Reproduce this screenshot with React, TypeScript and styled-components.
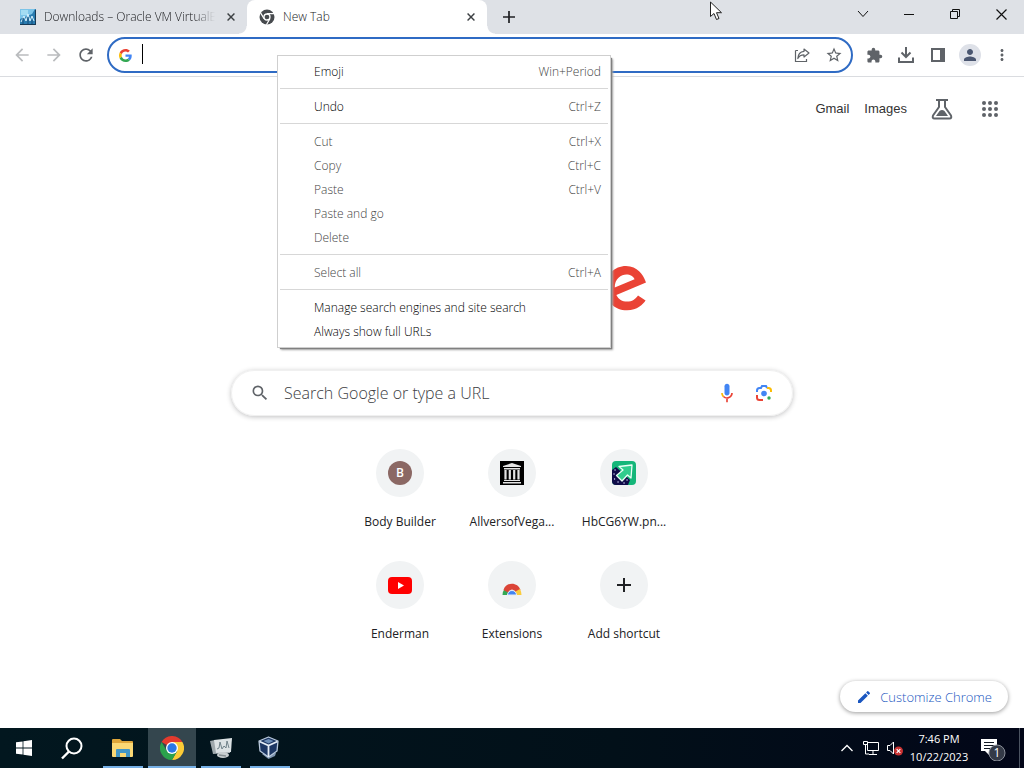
import React from "react";
import styled, { createGlobalStyle, css } from "styled-components";
import {
  MdArrowBack,
  MdArrowForward,
  MdRefresh,
  MdStarBorder,
  MdExtension,
  MdMoreVert,
  MdSearch,
  MdEdit,
  MdPerson,
} from "react-icons/md";

const uiFont = `"Open Sans", "Noto Sans", sans-serif`;

const GlobalStyle = createGlobalStyle`
  *, *::before, *::after { box-sizing: border-box; }
  body { margin: 0; background: #fff; font-family: ${uiFont}; font-size: 12px; color: #202124; }
  button, input { font: inherit; color: inherit; }
  svg { display: block; flex: none; }
`;

const Desktop = styled.div`
  position: relative;
  display: flex;
  flex-direction: column;
  min-height: 100vh;
  overflow: hidden;
`;

const plainButton = css`
  display: flex;
  align-items: center;
  justify-content: center;
  padding: 0;
  border: 0;
  background: transparent;
`;

/* Tab strip */

const TabStrip = styled.header`
  display: flex;
  height: 34px;
  background: #dee1e6;
`;

const Tab = styled.div<{ $active?: boolean }>`
  position: relative;
  display: flex;
  align-items: center;
  gap: 8px;
  width: ${(p) => (p.$active ? 240 : 247)}px;
  padding: 0 8px 0 ${(p) => (p.$active ? 12 : 20)}px;
  background: ${(p) => (p.$active ? "#fff" : "transparent")};
  border-radius: 8px 8px 0 0;
  color: #202124;
  font-weight: 300;

  &::before,
  &::after {
    content: ${(p) => (p.$active ? '""' : "none")};
    position: absolute;
    bottom: 0;
    width: 8px;
    height: 8px;
  }
  &::before {
    left: -8px;
    background: radial-gradient(circle at 0 0, transparent 7px, #fff 8px);
  }
  &::after {
    right: -8px;
    background: radial-gradient(circle at 100% 0, transparent 7px, #fff 8px);
  }
`;

const TabTitle = styled.span<{ $fade?: boolean }>`
  flex: 1;
  min-width: 0;
  overflow: hidden;
  white-space: nowrap;
  line-height: 20px;
  ${(p) => p.$fade && "mask-image: linear-gradient(to right, #000 88%, transparent);"}
`;

const TabButton = styled.button`
  ${plainButton}
  width: 16px;
  height: 16px;
`;

const NewTabButton = styled.button`
  ${plainButton}
  width: 28px;
  margin-left: 8px;
`;

const WindowControls = styled.div`
  display: flex;
  height: 28px;
  margin-left: auto;
`;

const WindowButton = styled.button`
  ${plainButton}
  width: 46px;
  color: #111;
`;

/* Toolbar */

const Toolbar = styled.div`
  display: flex;
  align-items: center;
  height: 43px;
  padding: 0 6px;
  border-bottom: 1px solid #dadce0;
`;

const ToolButton = styled.button<{ $dim?: boolean }>`
  ${plainButton}
  width: 32px;
  height: 32px;
  color: ${(p) => (p.$dim ? "#babcbe" : "#5f6368")};
`;

const Avatar = styled.span`
  display: flex;
  align-items: center;
  justify-content: center;
  width: 22px;
  height: 22px;
  border-radius: 50%;
  background: #dee1e8;
  color: #4a5670;
`;

const Omnibox = styled.form`
  display: flex;
  flex: 1;
  align-items: center;
  height: 36px;
  margin: 0 5px;
  padding: 0 1px 0 10px;
  border: 2px solid #2f6bc4;
  border-radius: 18px;
`;

const Caret = styled.span`
  width: 1px;
  height: 20px;
  margin: 0 0 2px 10px;
  background: #000;
`;

const OmniboxInput = styled.input`
  flex: 1;
  min-width: 0;
  border: 0;
  outline: 0;
  background: transparent;
  font-size: 14px;
`;

/* Context menu */

const Menu = styled.div`
  position: absolute;
  top: 55px;
  left: 277px;
  z-index: 2;
  width: 334px;
  padding: 4px 2px 3px;
  border: 1px solid #cfcfcf;
  background: #fff;
  box-shadow: 2px 2px 1px -1px #808080, 3px 3px 2px -1px #a8a8a8;
`;

const MenuItem = styled.button`
  display: flex;
  justify-content: space-between;
  width: 100%;
  height: 24px;
  padding: 0 7px 0 34px;
  border: 0;
  background: transparent;
  font-weight: 300;
  line-height: 24px;
  color: #000;

  &:disabled { color: #444; }
`;

const Shortcut = styled.span`
  color: #444;
`;

const MenuRule = styled.hr`
  height: 1px;
  margin: 4px 0 6px;
  border: 0;
  background: #d7d7d7;
`;

/* New tab page */

const Page = styled.main`
  display: flex;
  flex: 1;
  flex-direction: column;
  align-items: center;
`;

const TopLinks = styled.nav`
  display: flex;
  align-items: center;
  align-self: stretch;
  justify-content: flex-end;
  height: 64px;
  padding-right: 22px;
  font-family: "Liberation Sans", Arial, sans-serif;
  font-size: 13px;
`;

const TopLink = styled.a`
  margin-right: 15px;
  padding-bottom: 2px;
  color: #333;
  text-decoration: none;
`;

const TopButton = styled.button`
  ${plainButton}
  width: 24px;
  height: 32px;
  margin-left: 24px;

  ${TopLink} + & { margin-left: 8px; }
`;

const Logo = styled.div`
  margin: 100px 0 37px;
`;

const SearchBox = styled.form`
  display: flex;
  align-items: center;
  width: 562px;
  max-width: 100%;
  height: 46px;
  padding: 0 18px;
  border: 1px solid #f0f0f0;
  border-radius: 23px;
  box-shadow: 0 1px 5px rgba(32, 33, 36, 0.28);
  color: #5f6368;
`;

const SearchInput = styled.input`
  flex: 1;
  min-width: 0;
  padding: 0;
  margin-left: 14px;
  border: 0;
  outline: 0;
  background: transparent;
  font-size: 16px;
  font-weight: 300;

  &::placeholder { color: #3c4043; opacity: 1; }
`;

const SearchAction = styled.button`
  ${plainButton}
  width: 20px;
  height: 24px;
  margin-left: 17px;
`;

const Tiles = styled.div`
  display: grid;
  grid-template-columns: repeat(3, 112px);
  margin-top: 17px;
`;

const Tile = styled.a`
  display: flex;
  flex-direction: column;
  align-items: center;
  height: 112px;
  padding-top: 16px;
  color: #202124;
  text-decoration: none;
  line-height: 20px;
`;

const TileIcon = styled.span`
  display: flex;
  align-items: center;
  justify-content: center;
  width: 48px;
  height: 48px;
  margin-bottom: 15px;
  border-radius: 50%;
  background: #f1f3f4;
`;

const Monogram = styled.span`
  width: 24px;
  height: 24px;
  border-radius: 50%;
  background: #8b6864;
  color: #fff;
  font-weight: 600;
  line-height: 24px;
  text-align: center;
`;

const Footer = styled.footer`
  display: flex;
  align-self: stretch;
  justify-content: flex-end;
  margin-top: auto;
  padding: 0 16px 16px;
`;

const CustomizeButton = styled.button`
  ${plainButton}
  gap: 8px;
  height: 31px;
  padding: 0 16px;
  border-radius: 16px;
  background: #fff;
  box-shadow: 0 1px 4px rgba(0, 0, 0, 0.4);
  color: #1a56c0;
  font-size: 13px;
  font-weight: 300;
`;

/* Taskbar */

const Taskbar = styled.footer`
  display: flex;
  align-items: stretch;
  height: 40px;
  background: linear-gradient(to right, #02171f, #021019 60%, #020618);
  color: #fff;
`;

const TaskButton = styled.button`
  ${plainButton}
  width: 48px;
  color: #fff;
`;

const Apps = styled.div`
  display: flex;
  gap: 1px;
  margin-left: 3px;
`;

const AppButton = styled.button<{ $active?: boolean }>`
  ${plainButton}
  flex-direction: column;
  justify-content: space-between;
  width: 48px;
  padding-top: 8px;
  background: ${(p) => (p.$active ? "#34464e" : "transparent")};

  &::after {
    content: "";
    width: ${(p) => (p.$active ? 48 : 40)}px;
    height: 2px;
    background: #76b0e6;
  }
`;

const Tray = styled.div`
  display: flex;
  align-items: center;
  margin-left: auto;
`;

const TrayButton = styled.button`
  ${plainButton}
  width: 24px;
  height: 40px;
`;

const Clock = styled.time`
  width: 64px;
  text-align: center;
  line-height: 18px;
  font-size: 11px;
`;

const NoticeButton = styled.button`
  ${plainButton}
  width: 48px;
  height: 40px;
  padding-right: 4px;
`;

const ShowDesktop = styled.button`
  width: 5px;
  height: 40px;
  padding: 0;
  border: 0;
  border-left: 1px solid #4b5361;
  background: transparent;
`;

const Pointer = styled.div`
  position: absolute;
  top: 1px;
  left: 710px;
  pointer-events: none;
`;

const Cross = ({ size = 8 }: { size?: number }) => (
  <svg width={size} height={size} viewBox="0 0 10 10" stroke="#3c4043" strokeWidth="1.8">
    <path d="M.7.7l8.6 8.6M9.3.7L.7 9.3" />
  </svg>
);

const PerformanceIcon = () => (
  <svg width="16" height="16" viewBox="0 0 16 16">
    <rect width="16" height="16" fill="#2a7cb0" />
    <path d="M0 0h15L12 5 0 10z" fill="#7cc4e8" />
    <path d="M1 1h7v5H1z" fill="#a4dcf2" />
    <path d="M1 13l3-6 2 5 2-7 2 7 2-5 2 5" fill="none" stroke="#d8f3ff" />
    <path d="M3 15V9M8 15V8M12 15v-4" stroke="#164c78" />
    <path d="M0 15.5h16M15.500 1v15" stroke="#163a56" />
  </svg>
);

const ChromeMono = () => (
  <svg width="16" height="16" viewBox="0 0 16 16">
    <circle cx="8" cy="8" r="7.5" fill="#474a4e" />
    <circle cx="8" cy="8" r="3" fill="#474a4e" stroke="#fff" strokeWidth="1.3" />
    <path d="M8 4.6h7M5.1 9.7L1.6 3.9M10.9 9.7l-3.5 6" stroke="#fff" strokeWidth="1.2" />
  </svg>
);

const GoogleG = () => (
  <svg width="13" height="13" viewBox="0 0 48 48">
    <path fill="#EA4335" d="M24 9.5c3.54 0 6.71 1.22 9.21 3.6l6.85-6.85C35.9 2.38 30.47 0 24 0 14.62 0 6.51 5.38 2.56 13.22l7.98 6.19C12.43 13.72 17.74 9.5 24 9.5z" />
    <path fill="#4285F4" d="M46.98 24.55c0-1.57-.15-3.09-.38-4.55H24v9.02h12.94c-.58 2.96-2.26 5.48-4.78 7.18l7.73 6c4.51-4.18 7.09-10.36 7.09-17.65z" />
    <path fill="#FBBC05" d="M10.53 28.59c-.48-1.45-.76-2.99-.76-4.59s.27-3.14.76-4.59l-7.98-6.19C.92 16.46 0 20.12 0 24c0 3.88.92 7.54 2.56 10.78l7.97-6.19z" />
    <path fill="#34A853" d="M24 48c6.48 0 11.93-2.13 15.89-5.81l-7.73-6c-2.15 1.45-4.92 2.3-8.16 2.3-6.26 0-11.57-4.22-13.47-9.91l-7.98 6.19C6.51 42.62 14.62 48 24 48z" />
  </svg>
);

const ShareIcon = () => (
  <svg width="16" height="16" viewBox="0 0 16 16" fill="none" stroke="#5f6368" strokeWidth="1.2">
    <path d="M1.500 3.500v11h11V12M1.500 3.500H4" />
    <path d="M10 2l5 4-5 4V7.800C7 7.800 5 9 3.800 11.500 4 7.500 6 4.700 10 4.300z" strokeLinejoin="round" />
  </svg>
);

const DownloadIcon = () => (
  <svg width="18" height="18" viewBox="0 0 18 18" fill="none" stroke="#5f6368" strokeWidth="2">
    <path d="M9 1v9.500M4.500 6.500L9 11l4.500-4.500M2 11.500V16h14v-4.500" />
  </svg>
);

const PanelIcon = () => (
  <svg width="14" height="14" viewBox="0 0 14 14">
    <rect x="1" y="1" width="12" height="12" fill="none" stroke="#5f6368" strokeWidth="2" />
    <path d="M9 1h4v12H9z" fill="#5f6368" />
  </svg>
);

const FlaskIcon = () => (
  <svg width="22" height="22" viewBox="0 0 22 22" fill="none" stroke="#5f6368" strokeWidth="2">
    <path d="M5 2h12M8 2v7L2 17.500Q1 20.500 3.500 20.500h15Q21 20.500 20 17.500L14 9V2" strokeLinejoin="round" />
    <path d="M5 18l3.500-5q2.500-2 5 0L17 18z" fill="#5f6368" stroke="none" />
  </svg>
);

const AppsIcon = () => (
  <svg width="16" height="16" viewBox="0 0 16 16" fill="#5f6368">
    {[2, 8, 14].map((y) => [2, 8, 14].map((x) => <circle key={`${x}-${y}`} cx={x} cy={y} r="2" />))}
  </svg>
);

const GoogleLogo = () => (
  <svg width="272" height="92" viewBox="0 0 272 92" role="img" aria-label="Google">
    <path
      fill="#EA4335"
      d="M262.020 54.480l7.560 5.040c-2.440 3.610-8.320 9.830-18.480 9.830-12.600 0-22.010-9.740-22.010-22.180 0-13.190 9.490-22.180 20.920-22.180 11.510 0 17.140 9.160 18.980 14.110l1.010 2.520-29.650 12.280c2.270 4.450 5.800 6.720 10.750 6.720 4.960 0 8.400-2.440 10.920-6.140zm-23.270-7.980l19.820-8.230c-1.090-2.770-4.370-4.700-8.230-4.700-4.950 0-11.840 4.370-11.590 12.930z"
    />
  </svg>
);

const MicIcon = () => (
  <svg width="20" height="20" viewBox="0 0 24 24">
    <path fill="#4285f4" d="M12 15c1.700 0 3-1.300 3-3V4c0-1.700-1.300-3-3-3S9 2.300 9 4v8c0 1.700 1.300 3 3 3z" />
    <path fill="#ea4335" d="M11 18.920h2V23h-2z" />
    <path fill="#fbbc04" d="M7 12H5c0 1.930.780 3.680 2.050 4.950l1.410-1.410C7.560 14.630 7 13.380 7 12z" />
    <path fill="#ea4335" d="M12 17c-1.380 0-2.630-.560-3.540-1.470l-1.410 1.410A6.990 6.990 0 0 0 12 19c3.870 0 7-3.130 7-7h-2c0 2.760-2.240 5-5 5z" />
  </svg>
);

const LensIcon = () => (
  <svg width="18" height="18" viewBox="0 0 18 18" fill="none" strokeWidth="2">
    <path d="M2 8V6.500Q2 4 4.500 4H6l1-2h4l1 2" stroke="#4285f4" />
    <path d="M12 4h1.500Q16 4 16 6.500V8" stroke="#fbbc04" />
    <path d="M2 11v2.500Q2 16 4.500 16H8" stroke="#ea4335" />
    <circle cx="9" cy="9.500" r="2.800" fill="#4285f4" />
    <circle cx="14" cy="14" r="1.700" fill="#34a853" />
  </svg>
);

const ArchiveIcon = () => (
  <svg width="24" height="24" viewBox="0 0 24 24">
    <rect width="24" height="24" fill="#000" />
    <path d="M3 5l9-3 9 3v1H3zM4 7h16v1.500H4zM4 19h16v1H4zM3 21h18v1.500H3z" fill="#e4e4e4" />
    <path d="M5.500 9v9.500M9.800 9v9.500M14.200 9v9.500M18.500 9v9.500" stroke="#e4e4e4" strokeWidth="2.200" />
  </svg>
);

const GreenArrowIcon = () => (
  <svg width="24" height="24" viewBox="0 0 24 24">
    <rect width="24" height="24" rx="4" fill="#14b679" />
    <path d="M0 9l4-3 14 13-2 5H4q-4 0-4-4z" fill="#100c49" />
    <path d="M7 5.500l13-1.500-1 13-3.500-3-5.500 6-5.500-5.500L11 9z" fill="#2fcc8d" stroke="#e9fff5" strokeWidth="1.300" strokeLinejoin="round" />
    <path d="M3 9h.100M2 13h.100M2.500 18h.100M6 21h.100M12 22h.100M15 19h.100" stroke="#dcdcff" strokeWidth="1.300" strokeLinecap="round" />
  </svg>
);

const VideoIcon = () => (
  <svg width="24" height="17" viewBox="0 0 24 17">
    <rect width="24" height="17" rx="4" fill="#f00" />
    <path d="M10 5v7l6-3.500z" fill="#fff" />
  </svg>
);

const RainbowIcon = () => (
  <svg width="24" height="24" viewBox="0 0 24 24">
    <path d="M2.500 22a9.500 9.500 0 0 1 2-6l5 3.500-1 2.500z" fill="#34a853" />
    <path d="M3.500 17C6 8.500 18 8.500 20.500 17l-4.500 2.500q-4-6-8 0z" fill="#db4437" />
    <path d="M20 16q1.500 3 1.500 6h-6l-1-3z" fill="#fbcc3c" />
    <path d="M7.500 22a4.500 4.500 0 0 1 9 0z" fill="#4285f4" stroke="#e6ecf4" />
  </svg>
);

const PlusIcon = ({ size, weight }: { size: number; weight: number }) => (
  <svg width={size} height={size} viewBox="0 0 14 14" stroke="#202124" strokeWidth={weight}>
    <path d="M7 0v14M0 7h14" />
  </svg>
);

const StartIcon = () => (
  <svg width="16" height="16" viewBox="0 0 16 16" fill="#fff">
    <path d="M0 2.300L6.600 1.400v6.200H0zM7.400 1.300L16 0v7.600H7.400zM0 8.400h6.600v6.200L0 13.700zM7.400 8.400H16V16l-8.600-1.300z" />
  </svg>
);

const FindIcon = () => (
  <svg width="24" height="24" viewBox="0 0 24 24" fill="none" stroke="#fff" strokeWidth="2">
    <circle cx="14" cy="10" r="7.500" />
    <path d="M9 15.500L2 22.500" strokeWidth="2.400" />
  </svg>
);

const FolderIcon = () => (
  <svg width="24" height="24" viewBox="0 0 24 24">
    <path d="M1 4q0-1 1-1h7l2 2h10q1 0 1 1v14H1z" fill="#dfa63a" />
    <path d="M1 7h21v13q0 1-1 1H2q-1 0-1-1z" fill="#fbd874" />
    <path d="M5 21v-7q0-1 1-1h12q1 0 1 1v7h-4v-4H9v4z" fill="#4396c6" />
  </svg>
);

const ChromeIcon = () => (
  <svg width="24" height="24" viewBox="0 0 24 24">
    <path d="M12 12L1.600 6A12 12 0 0 1 22.400 6z" fill="#e33b2e" />
    <path d="M12 12V6h10.400A12 12 0 0 1 12 24l5.200-9z" fill="#fccb36" />
    <path d="M6.800 15L1.600 6A12 12 0 0 0 12 24l5.200-9z" fill="#2ba24c" />
    <circle cx="12" cy="12" r="6" fill="#fff" />
    <circle cx="12" cy="12" r="4.700" fill="#2b78e4" />
  </svg>
);

const MonitorIcon = () => (
  <svg width="24" height="24" viewBox="0 0 24 24">
    <path d="M1 5l5-1 16 0-1 13-17 1z" fill="#9fa8ac" />
    <path d="M5 4l18-2-1 14-15 1z" fill="#dce2e4" />
    <path d="M8 13l2-1 1-6 2 7 2-3 2 2 1-7 2 7" fill="none" stroke="#70828a" />
    <ellipse cx="14" cy="19" rx="6" ry="3" fill="#c9cfd1" />
    <path d="M10 19l7 1" stroke="#858e92" strokeWidth="1.500" />
  </svg>
);

const CubeIcon = () => (
  <svg width="24" height="24" viewBox="0 0 24 24">
    <path d="M4 18l6.500 5 6.500-3 1-3z" fill="#7f95b0" />
    <path d="M10.500 1L20 5l-1 10-8.500 6L2 15 1 5z" fill="#1d3763" stroke="#b9c9dc" strokeWidth="1.300" strokeLinejoin="round" />
    <path d="M1.500 5.500l9 4 9-4M10.500 10v11" fill="none" stroke="#e5edf6" strokeWidth="1.800" />
    <path d="M5.500 5l5-2 5 2-5 2.500z" fill="#6e8fb8" />
  </svg>
);

const menuGroups = [
  [{ label: "Emoji", keys: "Win+Period", on: true }],
  [{ label: "Undo", keys: "Ctrl+Z", on: true }],
  [
    { label: "Cut", keys: "Ctrl+X" },
    { label: "Copy", keys: "Ctrl+C" },
    { label: "Paste", keys: "Ctrl+V" },
    { label: "Paste and go" },
    { label: "Delete" },
  ],
  [{ label: "Select all", keys: "Ctrl+A" }],
  [
    { label: "Manage search engines and site search", on: true },
    { label: "Always show full URLs", on: true },
  ],
] as { label: string; keys?: string; on?: boolean }[][];

const tiles = [
  { label: "Body Builder", icon: <Monogram>B</Monogram> },
  { label: "AllversofVega...", icon: <ArchiveIcon /> },
  { label: "HbCG6YW.pn...", icon: <GreenArrowIcon /> },
  { label: "Enderman", icon: <VideoIcon /> },
  { label: "Extensions", icon: <RainbowIcon /> },
  { label: "Add shortcut", icon: <PlusIcon size={14} weight={2} /> },
];

const apps = [
  { label: "File Explorer", icon: <FolderIcon /> },
  { label: "Google Chrome", icon: <ChromeIcon />, active: true },
  { label: "Performance Monitor", icon: <MonitorIcon /> },
  { label: "VirtualBox", icon: <CubeIcon /> },
];

export default function App() {
  return (
    <Desktop>
      <GlobalStyle />
      <TabStrip>
        <Tab>
          <PerformanceIcon />
          <TabTitle $fade>Downloads – Oracle VM VirtualB</TabTitle>
          <TabButton aria-label="Close tab"><Cross /></TabButton>
        </Tab>
        <Tab $active>
          <ChromeMono />
          <TabTitle>New Tab</TabTitle>
          <TabButton aria-label="Close tab"><Cross /></TabButton>
        </Tab>
        <NewTabButton aria-label="New tab"><PlusIcon size={12} weight={2} /></NewTabButton>
        <WindowControls>
          <WindowButton aria-label="Search tabs">
            <svg width="12" height="8" viewBox="0 0 12 8" fill="none" stroke="currentColor"><path d="M1 1l5 5.500L11 1" /></svg>
          </WindowButton>
          <WindowButton aria-label="Minimize">
            <svg width="10" height="10" viewBox="0 0 10 10" stroke="currentColor"><path d="M0 5.500h10" /></svg>
          </WindowButton>
          <WindowButton aria-label="Restore">
            <svg width="10" height="10" viewBox="0 0 10 10" fill="none" stroke="currentColor"><path d="M.5 2.500h7v7h-7zM2.500 2.500v-2h7v7h-2" /></svg>
          </WindowButton>
          <WindowButton aria-label="Close">
            <svg width="11" height="11" viewBox="0 0 11 11" stroke="currentColor" strokeWidth="1.200"><path d="M.5.500l10 10M10.500.500l-10 10" /></svg>
          </WindowButton>
        </WindowControls>
      </TabStrip>

      <Toolbar>
        <ToolButton $dim aria-label="Back"><MdArrowBack size={20} /></ToolButton>
        <ToolButton $dim aria-label="Forward"><MdArrowForward size={20} /></ToolButton>
        <ToolButton aria-label="Reload"><MdRefresh size={20} /></ToolButton>
        <Omnibox>
          <GoogleG />
          <Caret />
          <OmniboxInput aria-label="Address and search bar" />
          <ToolButton type="button" aria-label="Share"><ShareIcon /></ToolButton>
          <ToolButton type="button" aria-label="Bookmark this tab"><MdStarBorder size={18} /></ToolButton>
        </Omnibox>
        <ToolButton aria-label="Extensions"><MdExtension size={17} /></ToolButton>
        <ToolButton aria-label="Downloads"><DownloadIcon /></ToolButton>
        <ToolButton aria-label="Side panel"><PanelIcon /></ToolButton>
        <ToolButton aria-label="Profile"><Avatar><MdPerson size={18} /></Avatar></ToolButton>
        <ToolButton aria-label="Menu"><MdMoreVert size={18} /></ToolButton>
      </Toolbar>

      <Menu role="menu">
        {menuGroups.map((group, i) => (
          <React.Fragment key={i}>
            {i > 0 && <MenuRule />}
            {group.map((item) => (
              <MenuItem key={item.label} role="menuitem" disabled={!item.on}>
                <span>{item.label}</span>
                {item.keys && <Shortcut>{item.keys}</Shortcut>}
              </MenuItem>
            ))}
          </React.Fragment>
        ))}
      </Menu>

      <Page>
        <TopLinks>
          <TopLink href="#gmail">Gmail</TopLink>
          <TopLink href="#images">Images</TopLink>
          <TopButton aria-label="Search Labs"><FlaskIcon /></TopButton>
          <TopButton aria-label="Google apps"><AppsIcon /></TopButton>
        </TopLinks>
        <Logo><GoogleLogo /></Logo>
        <SearchBox>
          <MdSearch size={20} />
          <SearchInput aria-label="Search" placeholder="Search Google or type a URL" />
          <SearchAction type="button" aria-label="Search by voice"><MicIcon /></SearchAction>
          <SearchAction type="button" aria-label="Search by image"><LensIcon /></SearchAction>
        </SearchBox>
        <Tiles>
          {tiles.map((tile) => (
            <Tile key={tile.label} href="#site">
              <TileIcon>{tile.icon}</TileIcon>
              {tile.label}
            </Tile>
          ))}
        </Tiles>
        <Footer>
          <CustomizeButton><MdEdit size={16} />Customize Chrome</CustomizeButton>
        </Footer>
      </Page>

      <Taskbar>
        <TaskButton aria-label="Start"><StartIcon /></TaskButton>
        <TaskButton aria-label="Search"><FindIcon /></TaskButton>
        <Apps>
          {apps.map((app) => (
            <AppButton key={app.label} $active={app.active} aria-label={app.label}>{app.icon}</AppButton>
          ))}
        </Apps>
        <Tray>
          <TrayButton aria-label="Show hidden icons">
            <svg width="12" height="8" viewBox="0 0 12 8" fill="none" stroke="#fff" strokeWidth="1.300"><path d="M.5 7L6 1.500 11.500 7" /></svg>
          </TrayButton>
          <TrayButton aria-label="Network">
            <svg width="16" height="16" viewBox="0 0 16 16" fill="none" stroke="#fff">
              <path d="M4.500 2.500h11v8h-11zM10 11v3M6 14.500h8M.5 1.500h4v3h-4zM2.500 5v9H6" />
            </svg>
          </TrayButton>
          <TrayButton aria-label="Volume">
            <svg width="16" height="16" viewBox="0 0 16 16">
              <path d="M.5 5.500h2.500l3.500-3.500v12L3 10.500H.5z" fill="none" stroke="#fff" />
              <circle cx="11.500" cy="11" r="4.500" fill="#c93232" />
              <path d="M9.700 9.200l3.600 3.600M13.300 9.200l-3.600 3.600" stroke="#fff" strokeWidth="1.200" />
            </svg>
          </TrayButton>
          <Clock>7:46 PM<br />10/22/2023</Clock>
          <NoticeButton aria-label="1 notification">
            <svg width="26" height="26" viewBox="0 0 26 26">
              <path d="M1 4h16v12h-8v4l-4-4H1z" fill="#fff" />
              <path d="M4 7.500h10M4 10.500h10M4 13.500h7" stroke="#101722" />
              <circle cx="17" cy="18" r="8" fill="#343a47" stroke="#8b909a" />
              <text x="17" y="22" fill="#fff" fontSize="12" fontFamily="Open Sans, sans-serif" textAnchor="middle">1</text>
            </svg>
          </NoticeButton>
          <ShowDesktop aria-label="Show desktop" />
        </Tray>
      </Taskbar>

      <Pointer>
        <svg width="13" height="20" viewBox="0 0 13 20">
          <path d="M.5 1v14.500l3.500-3 2.500 6 2.500-1-2.500-5.800h5z" fill="#fff" stroke="#222" />
        </svg>
      </Pointer>
    </Desktop>
  );
}
